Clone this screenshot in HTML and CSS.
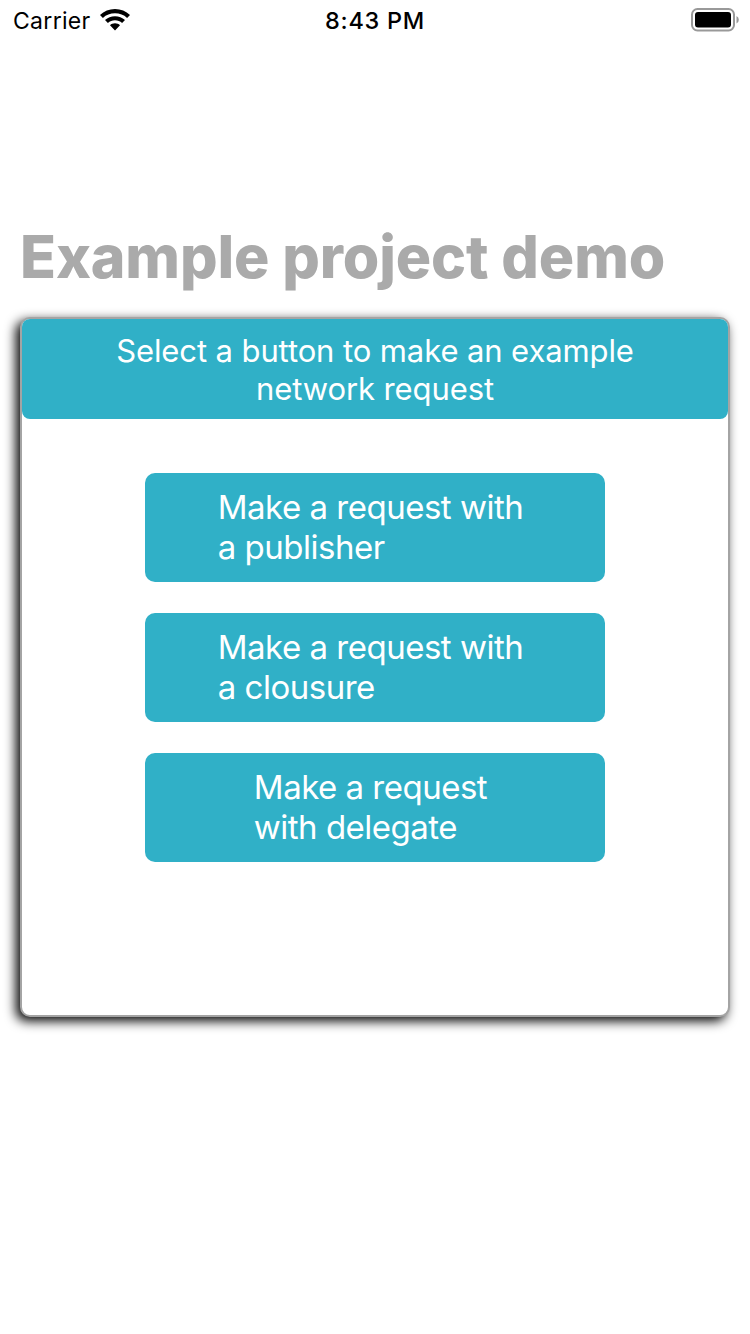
FILE: index.html
```html
<!DOCTYPE html>
<html lang="en">
<head>
<meta charset="utf-8">
<title>Example project demo</title>
<link rel="stylesheet" href="styles.css">
</head>
<body>
<header class="status">
  <div class="carrier"><span class="carrier-name">Carrier</span>
    <svg class="wifi" width="30" height="22" viewBox="0 0 30 22"><path d="M15 0C9.200 0 4 2.200 0 5.900L2.900 8.900C6.200 5.900 10.300 4.300 15 4.300S23.800 5.900 27.100 8.900L30 5.900C26 2.200 20.800 0 15 0ZM15 7.200C11.200 7.200 7.700 8.600 5 11L7.900 14C9.900 12.200 12.200 11.300 15 11.300S20.100 12.200 22.100 14L25 11C22.300 8.600 18.800 7.200 15 7.200ZM15 14.300C13.100 14.300 11.300 15 10 16.200L15 21.500L20 16.200C18.700 15 16.900 14.300 15 14.300Z"/></svg>
  </div>
  <time class="clock">8:43 PM</time>
  <svg class="battery" width="48" height="24" viewBox="0 0 48 24"><rect x="1" y="1" width="42" height="21.500" rx="5.500" fill="none" stroke="#999" stroke-width="2"/><rect x="4" y="4" width="36" height="15.500" rx="3"/><path d="M45.500 8q2.300 1 2.300 3.800t-2.300 3.700z" fill="#999"/></svg>
</header>
<main class="page">
  <h1 class="title">Example project demo</h1>
  <section class="card">
    <h2 class="banner"><span>Select a button to make an example</span><span>network request</span></h2>
    <div class="actions">
      <button class="action"><span class="label">Make a request with<br>a publisher</span></button>
      <button class="action"><span class="label">Make a request with<br>a clousure</span></button>
      <button class="action"><span class="label">Make a request<br>with delegate</span></button>
    </div>
  </section>
</main>
</body>
</html>
```
FILE: styles.css
```css
* { box-sizing: border-box; }
body { margin: 0; min-height: 1334px; background: #fff; font-family: Inter, sans-serif; color: #000; }
.status { height: 40px; padding: 0 11px 0 13px; display: grid; grid-template-columns: 1fr auto 1fr; align-items: center; font-size: 23px; }
.carrier { display: flex; align-items: center; gap: 9px; letter-spacing: 0.3px; }
.carrier-name { padding-top: 2px; }
.clock { margin-left: -2px; font-size: 23.5px; font-weight: 540; letter-spacing: 0.7px; }
.battery { justify-self: end; }
.page { padding: 182px 20px 0; }
.title { margin: 0 0 25px; height: 70px; line-height: 70px; font-size: 59px; font-weight: 840; letter-spacing: -0.1px; color: #aaa; white-space: nowrap; }
.card { height: 700px; border: 2px solid #a4a4a4; border-radius: 10px; background: #fff; box-shadow: -4px 4px 12px #000; }
.banner { margin: 0; height: 100px; padding-top: 13px; border-radius: 8px; background: #30b0c7; color: #fff; display: flex; flex-direction: column; align-items: center; font-size: 31px; font-weight: 400; letter-spacing: -0.1px; line-height: 38px; }
.actions { display: flex; flex-direction: column; align-items: center; gap: 31px; padding-top: 54px; }
.action { width: 460px; height: 109px; padding: 0 9px 2px 0; border: 0; border-radius: 10px; background: #30b0c7; color: #fff; font: 33px/40px Inter, sans-serif; letter-spacing: -0.5px; display: flex; align-items: center; justify-content: center; }
.label { text-align: left; white-space: nowrap; }
```
